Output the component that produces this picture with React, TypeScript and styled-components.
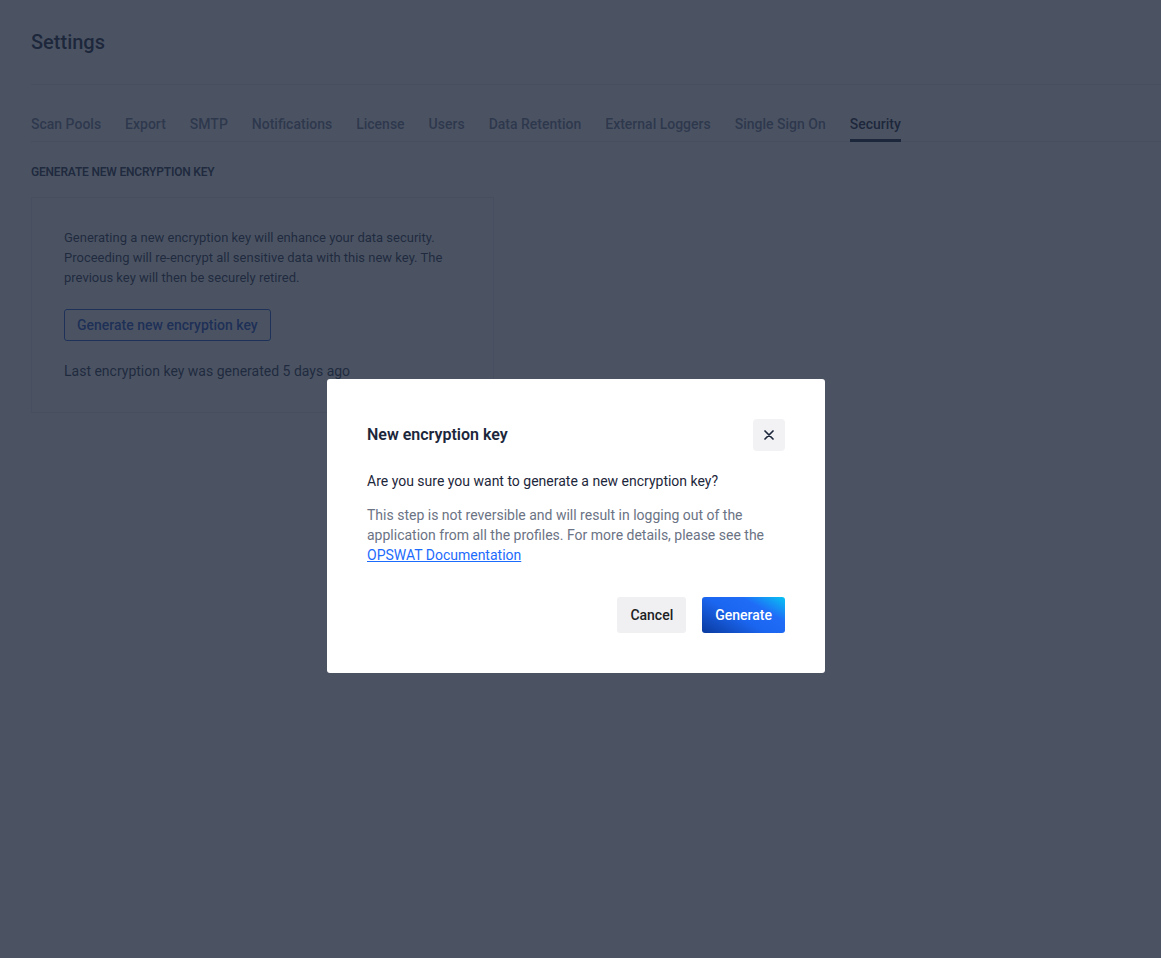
import styled, { createGlobalStyle } from "styled-components";

const GlobalStyle = createGlobalStyle`
  html, body {
    margin: 0;
    padding: 0;
    background: #ffffff;
  }
  body {
    font-family: Roboto, "Liberation Sans", sans-serif;
    color: #1d273b;
  }
  * {
    box-sizing: border-box;
  }
`;

const tabs = [
  "Scan Pools",
  "Export",
  "SMTP",
  "Notifications",
  "License",
  "Users",
  "Data Retention",
  "External Loggers",
  "Single Sign On",
  "Security",
];

const App = () => {
  return (
    <>
      <GlobalStyle />
      <Page>
        <Header>
          <Title>Settings</Title>
        </Header>
        <TabBar>
          {tabs.map((t) => (
            <Tab key={t} $active={t === "Security"}>
              {t}
            </Tab>
          ))}
        </TabBar>
        <SectionLabel>GENERATE NEW ENCRYPTION KEY</SectionLabel>
        <Card>
          <CardText>
            Generating a new encryption key will enhance your data security.
            Proceeding will re-encrypt all sensitive data with this new key. The
            previous key will then be securely retired.
          </CardText>
          <OutlineButton>Generate new encryption key</OutlineButton>
          <LastGenerated>Last encryption key was generated 5 days ago</LastGenerated>
        </Card>
      </Page>

      <Overlay>
        <Dialog>
          <DialogHeader>
            <DialogTitle>New encryption key</DialogTitle>
            <CloseButton aria-label="Close">
              <svg width="10" height="10" viewBox="0 0 10 10">
                <path
                  d="M1 1 L9 9 M9 1 L1 9"
                  stroke="#1d273b"
                  strokeWidth="1.7"
                  strokeLinecap="round"
                />
              </svg>
            </CloseButton>
          </DialogHeader>
          <Question>Are you sure you want to generate a new encryption key?</Question>
          <Details>
            This step is not reversible and will result in logging out of the
            application from all the profiles. For more details, please see the{" "}
            <DocLink href="#">OPSWAT Documentation</DocLink>
          </Details>
          <Actions>
            <SecondaryButton>Cancel</SecondaryButton>
            <PrimaryButton>Generate</PrimaryButton>
          </Actions>
        </Dialog>
      </Overlay>
    </>
  );
};

const Page = styled.div`
  min-height: 958px;
  padding-left: 31px;
  padding-top: 28px;
`;

const Header = styled.div`
  padding-bottom: 28px;
  border-bottom: 1px solid #e3e5ea;
`;

const Title = styled.h1`
  margin: 0;
  font-size: 20px;
  line-height: 28px;
  font-weight: 500;
  color: #1d273b;
`;

const TabBar = styled.div`
  display: flex;
  gap: 24px;
  margin-top: 23px;
  border-bottom: 1px solid #e3e5ea;
`;

const Tab = styled.div<{ $active?: boolean }>`
  padding: 6px 0 5px;
  font-size: 14px;
  line-height: 20px;
  font-weight: 500;
  color: ${(p) => (p.$active ? "#1d273b" : "#707a8f")};
  border-bottom: 3px solid ${(p) => (p.$active ? "#1d273b" : "transparent")};
  margin-bottom: -1px;
  white-space: nowrap;
`;

const SectionLabel = styled.div`
  margin-top: 22px;
  font-size: 12px;
  line-height: 16px;
  font-weight: 600;
  color: #2b3548;
  letter-spacing: -0.2px;
`;

const Card = styled.div`
  margin-top: 17px;
  width: 463px;
  padding: 30px 32px 31px;
  border: 1px solid #e3e5ea;
`;

const CardText = styled.p`
  margin: 0;
  font-size: 13px;
  line-height: 20px;
  color: #2b3548;
`;

const OutlineButton = styled.button`
  margin-top: 21px;
  height: 32px;
  padding: 0 12px;
  border: 1px solid #2155c9;
  border-radius: 3px;
  background: transparent;
  font-family: Roboto, "Liberation Sans", sans-serif;
  font-size: 14px;
  font-weight: 500;
  color: #1f4fbf;
`;

const LastGenerated = styled.div`
  margin-top: 20px;
  font-size: 14px;
  line-height: 20px;
  color: #2b3548;
`;

const Overlay = styled.div`
  position: fixed;
  inset: 0;
  background: rgba(30, 40, 60, 0.8);
  display: flex;
  align-items: flex-start;
  justify-content: center;
  padding-top: 379px;
  padding-right: 9px;
`;

const Dialog = styled.div`
  width: 498px;
  padding: 40px;
  background: #ffffff;
  border-radius: 3px;
  font-family: Roboto, "Liberation Sans", sans-serif;
`;

const DialogHeader = styled.div`
  display: flex;
  align-items: center;
  justify-content: space-between;
`;

const DialogTitle = styled.h2`
  margin: 0;
  font-size: 16px;
  line-height: 24px;
  font-weight: 600;
  color: #1d273b;
`;

const CloseButton = styled.button`
  width: 32px;
  height: 32px;
  display: flex;
  align-items: center;
  justify-content: center;
  border: none;
  border-radius: 4px;
  background: #f2f2f4;
  padding: 0;
`;

const Question = styled.p`
  margin: 20px 0 0;
  font-size: 14px;
  line-height: 20px;
  color: #1d273b;
`;

const Details = styled.p`
  margin: 14px 0 0;
  font-size: 14px;
  line-height: 20px;
  color: #6b7384;
`;

const DocLink = styled.a`
  color: #1d6bfc;
  text-decoration: underline;
`;

const Actions = styled.div`
  display: flex;
  justify-content: flex-end;
  gap: 16px;
  margin-top: 32px;
`;

const BaseButton = styled.button`
  height: 36px;
  border: none;
  border-radius: 3px;
  font-family: Roboto, "Liberation Sans", sans-serif;
  font-size: 14px;
  font-weight: 500;
`;

const SecondaryButton = styled(BaseButton)`
  padding: 0 13px;
  background: #f0f0f2;
  color: #1d1f24;
`;

const PrimaryButton = styled(BaseButton)`
  padding: 0 13px;
  color: #ffffff;
  background: linear-gradient(30deg, #0a3a9e 0%, #1b66f0 45%, #1f6cf7 70%, #07c4f3 100%);
`;

export default App;
